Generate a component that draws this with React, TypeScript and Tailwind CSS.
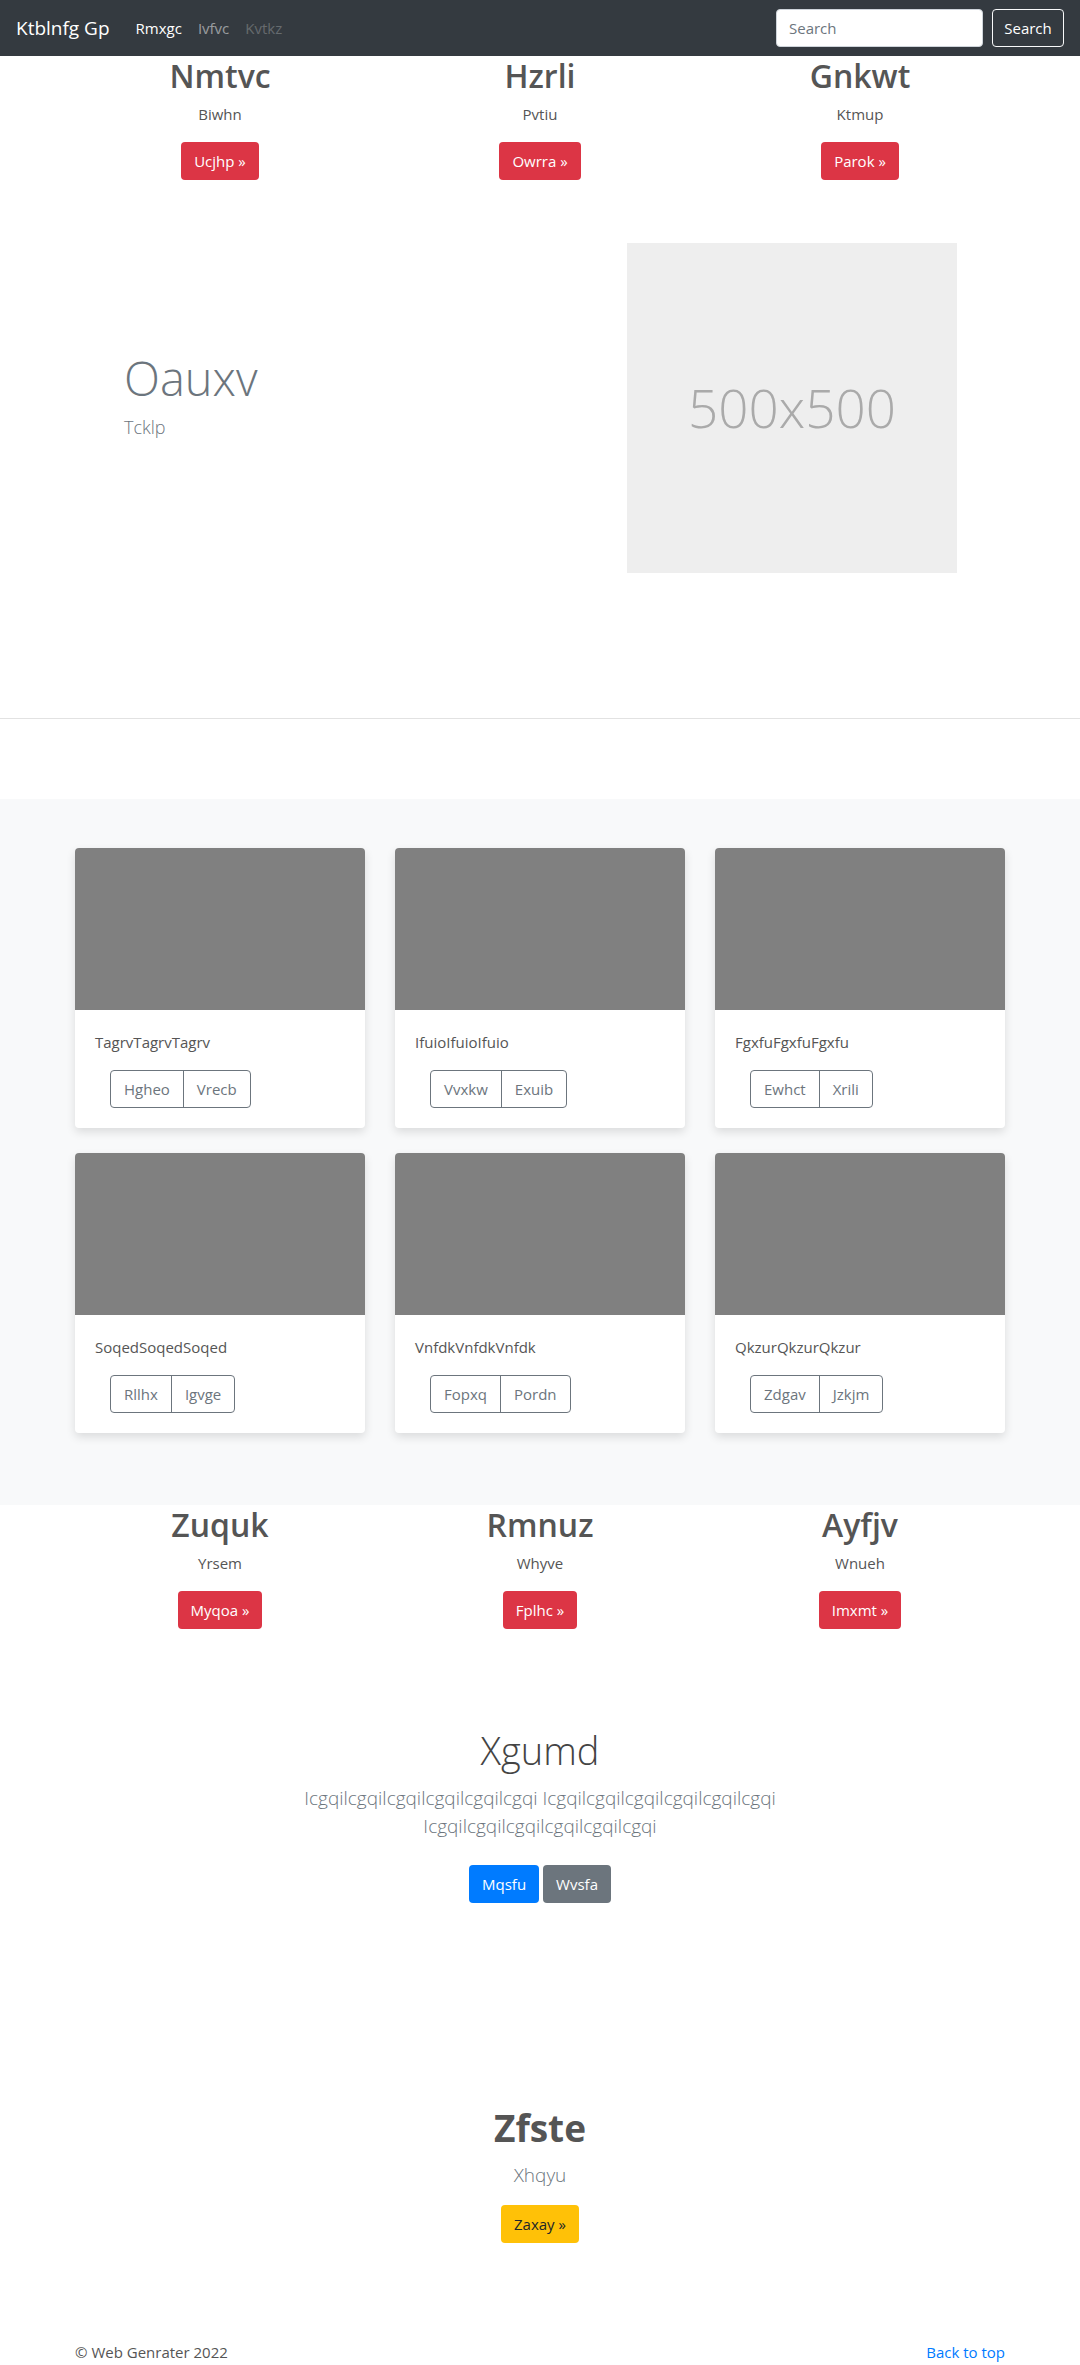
import React from "react";

const cols1 = [
  { h: "Nmtvc", p: "Biwhn", b: "Ucjhp »" },
  { h: "Hzrli", p: "Pvtiu", b: "Owrra »" },
  { h: "Gnkwt", p: "Ktmup", b: "Parok »" },
];
const cols2 = [
  { h: "Zuquk", p: "Yrsem", b: "Myqoa »" },
  { h: "Rmnuz", p: "Whyve", b: "Fplhc »" },
  { h: "Ayfjv", p: "Wnueh", b: "Imxmt »" },
];
const cards = [
  { t: "TagrvTagrvTagrv", a: "Hgheo", b: "Vrecb" },
  { t: "IfuioIfuioIfuio", a: "Vvxkw", b: "Exuib" },
  { t: "FgxfuFgxfuFgxfu", a: "Ewhct", b: "Xrili" },
  { t: "SoqedSoqedSoqed", a: "Rllhx", b: "Igvge" },
  { t: "VnfdkVnfdkVnfdk", a: "Fopxq", b: "Pordn" },
  { t: "QkzurQkzurQkzur", a: "Zdgav", b: "Jzkjm" },
];

function ThreeCols({ items }: { items: { h: string; p: string; b: string }[] }) {
  return (
    <div className="w-[960px] mx-auto grid grid-cols-3">
      {items.map((c) => (
        <div key={c.h} className="px-[15px] flex flex-col items-center text-center">
          <h2 className="text-[32px] leading-[40px] font-semibold text-[#555]">{c.h}</h2>
          <p className="mt-[6px] text-[15px] leading-[24px] text-[#555]">{c.p}</p>
          <button className="mt-[16px] h-[38px] px-[13px] rounded-[4px] bg-[#dc3545] text-white text-[15px]">
            {c.b}
          </button>
        </div>
      ))}
    </div>
  );
}

export default function App() {
  return (
    <div className="font-['Open_Sans'] bg-white min-h-[2365px]">
      {/* Navbar */}
      <nav className="h-[56px] bg-[#343a40] flex items-center px-[16px]">
        <span className="text-[19px] text-white mr-[18px]">Ktblnfg Gp</span>
        <div className="flex items-center text-[15px]">
          <span className="px-[8px] text-white">Rmxgc</span>
          <span className="px-[8px] text-white/50">Ivfvc</span>
          <span className="px-[8px] text-white/25">Kvtkz</span>
        </div>
        <div className="ml-auto flex items-center gap-[9px]">
          <div className="w-[207px] h-[38px] bg-white rounded-[4px] border border-[#ced4da] flex items-center px-[12px] text-[15px] text-[#6c757d]">
            Search
          </div>
          <button className="w-[72px] h-[38px] rounded-[4px] border border-[#f8f9fa] text-white text-[15px]">
            Search
          </button>
        </div>
      </nav>

      <ThreeCols items={cols1} />

      {/* Hero */}
      <div className="w-[960px] mx-auto grid grid-cols-2 pt-[63px]">
        <div className="pl-[64px] pt-[108px]">
          <h1 className="text-[47px] leading-[55px] font-light text-[#6c757d]">Oauxv</h1>
          <p className="mt-[8px] text-[18px] leading-[27px] font-light text-[#6c757d]">Tcklp</p>
        </div>
        <div className="pl-[87px]">
          <div className="w-[330px] h-[330px] bg-[#eeeeee] flex items-center justify-center">
            <span className="text-[53px] font-light text-[#aaaaaa]">500x500</span>
          </div>
        </div>
      </div>

      <hr className="mt-[145px] border-0 border-t border-[#e2e2e2]" />

      {/* Album */}
      <div className="mt-[80px] bg-[#f8f9fa] pt-[49px] pb-[72px]">
        <div className="w-[960px] mx-auto px-[15px] grid grid-cols-3 gap-x-[30px] gap-y-[25px]">
          {cards.map((c) => (
            <div key={c.t} className="bg-white rounded-[4px] shadow-[0_4px_10px_rgba(0,0,0,0.12)] overflow-hidden">
              <div className="h-[162px] bg-[#808080]" />
              <div className="p-[20px]">
                <p className="text-[15px] leading-[24px] text-[#555]">{c.t}</p>
                <div className="mt-[16px] ml-[15px] inline-flex h-[38px] rounded-[4px] border border-[#6c757d] text-[#6c757d] text-[15px]">
                  <span className="px-[13px] flex items-center border-r border-[#6c757d]">{c.a}</span>
                  <span className="px-[13px] flex items-center">{c.b}</span>
                </div>
              </div>
            </div>
          ))}
        </div>
      </div>

      <ThreeCols items={cols2} />

      {/* Xgumd */}
      <div className="mt-[98px] max-w-[560px] mx-auto text-center">
        <h1 className="text-[38px] leading-[46px] font-light text-[#444]">Xgumd</h1>
        <p className="mt-[11px] text-[19px] leading-[28px] font-light text-[#6c757d]">
          Icgqilcgqilcgqilcgqilcgqilcgqi Icgqilcgqilcgqilcgqilcgqilcgqi Icgqilcgqilcgqilcgqilcgqilcgqi
        </p>
        <div className="mt-[25px] flex justify-center gap-[4px]">
          <button className="h-[38px] px-[13px] rounded-[4px] bg-[#007bff] text-white text-[15px]">Mqsfu</button>
          <button className="h-[38px] px-[13px] rounded-[4px] bg-[#6c757d] text-white text-[15px]">Wvsfa</button>
        </div>
      </div>

      {/* Zfste */}
      <div className="mt-[202px] flex flex-col items-center text-center">
        <h2 className="text-[37px] leading-[46px] font-bold text-[#555]">Zfste</h2>
        <p className="mt-[9px] text-[19px] leading-[30px] font-light text-[#6c757d]">Xhqyu</p>
        <button className="mt-[15px] h-[38px] px-[13px] rounded-[4px] bg-[#ffc107] text-[#212529] text-[15px]">
          Zaxay »
        </button>
      </div>

      {/* Footer */}
      <footer className="mt-[97px] w-[960px] mx-auto px-[15px] flex justify-between text-[15px] leading-[24px]">
        <span className="text-[#555]">© Web Genrater 2022</span>
        <span className="text-[#007bff]">Back to top</span>
      </footer>
    </div>
  );
}
